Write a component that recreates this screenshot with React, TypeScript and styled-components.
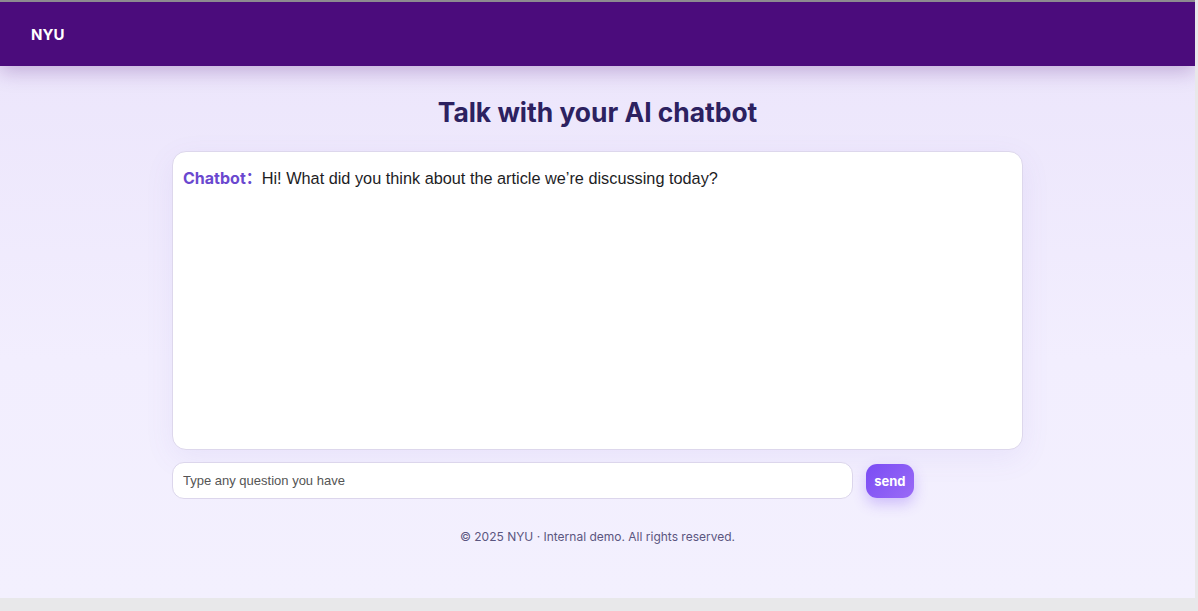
import React, { useState } from 'react';
import styled, { createGlobalStyle } from 'styled-components';

const GlobalStyle = createGlobalStyle`
    html, body {
        margin: 0;
        padding: 0;
        background: #e8e8ea;
    }
    body {
        font-family: Inter, "Noto Sans", sans-serif;
    }
`;

const Frame = styled.div`
    width: 1195px;
    height: 596px;
    border-top: 2px solid #8d8b90;
    background: linear-gradient(180deg, #ebe4fb 0%, #f2eefe 60%, #f3f0fe 100%);
    display: flex;
    flex-direction: column;
    overflow: hidden;
`;

const Header = styled.header`
    height: 64px;
    flex-shrink: 0;
    background: #4b0c7c;
    display: flex;
    align-items: center;
    padding: 0 31px;
    box-shadow: 0 6px 18px rgba(75, 12, 124, 0.25);
    position: relative;
    z-index: 1;
`;

const Brand = styled.div`
    color: #ffffff;
    font-weight: 700;
    font-size: 15px;
    letter-spacing: 0.1px;
`;

const Main = styled.main`
    width: 851px;
    margin: 0 auto;
    display: flex;
    flex-direction: column;
`;

const Title = styled.h1`
    margin: 28px 0 21px;
    text-align: center;
    font-size: 26.4px;
    font-weight: 700;
    color: #2c2160;
    line-height: 36px;
`;

const ChatBox = styled.div`
    height: 299px;
    box-sizing: border-box;
    background: #ffffff;
    border: 1px solid #ddd7ec;
    border-radius: 14px;
    padding: 16px 10px;
    box-shadow: 0 8px 30px rgba(120, 90, 200, 0.08);
`;

const Message = styled.div`
    font-family: "Liberation Sans", Arial, sans-serif;
    font-size: 16.3px;
    line-height: 20px;
    color: #1d1d1f;
`;

const Sender = styled.span`
    font-family: Inter, "Noto Sans CJK SC", sans-serif;
    font-weight: 700;
    font-size: 16px;
    color: #6a48cf;
    margin-right: 0;
`;

const InputRow = styled.form`
    display: flex;
    align-items: center;
    gap: 13px;
    margin-top: 12px;
`;

const Input = styled.input`
    width: 80%;
    height: 37px;
    box-sizing: border-box;
    border: 1px solid #dcd6ec;
    border-radius: 12px;
    background: #ffffff;
    padding: 0 10px;
    font-family: "Liberation Sans", Arial, sans-serif;
    font-size: 13px;
    color: #222;
    outline: none;
    &::placeholder {
        color: #555;
    }
`;

const SendButton = styled.button`
    width: 48px;
    height: 34px;
    border: none;
    border-radius: 11px;
    background: linear-gradient(135deg, #7a4cf4 0%, #9a6bf6 100%);
    color: #fff;
    font-family: Inter, sans-serif;
    font-weight: 700;
    font-size: 13px;
    box-shadow: 0 6px 14px rgba(124, 77, 244, 0.3);
    cursor: pointer;
`;

const Footer = styled.footer`
    margin-top: 30px;
    text-align: center;
    font-size: 12px;
    color: #5b5680;
`;

export default function App() {
    const [text, setText] = useState('');
    return (
        <>
            <GlobalStyle />
            <Frame>
                <Header>
                    <Brand>NYU</Brand>
                </Header>
                <Main>
                    <Title>Talk with your AI chatbot</Title>
                    <ChatBox>
                        <Message>
                            <Sender>Chatbot：</Sender>
                            Hi! What did you think about the article we’re discussing today?
                        </Message>
                    </ChatBox>
                    <InputRow onSubmit={(e) => e.preventDefault()}>
                        <Input
                            placeholder="Type any question you have"
                            value={text}
                            onChange={(e) => setText(e.target.value)}
                        />
                        <SendButton type="submit">send</SendButton>
                    </InputRow>
                    <Footer>© 2025 NYU · Internal demo. All rights reserved.</Footer>
                </Main>
            </Frame>
        </>
    );
}
